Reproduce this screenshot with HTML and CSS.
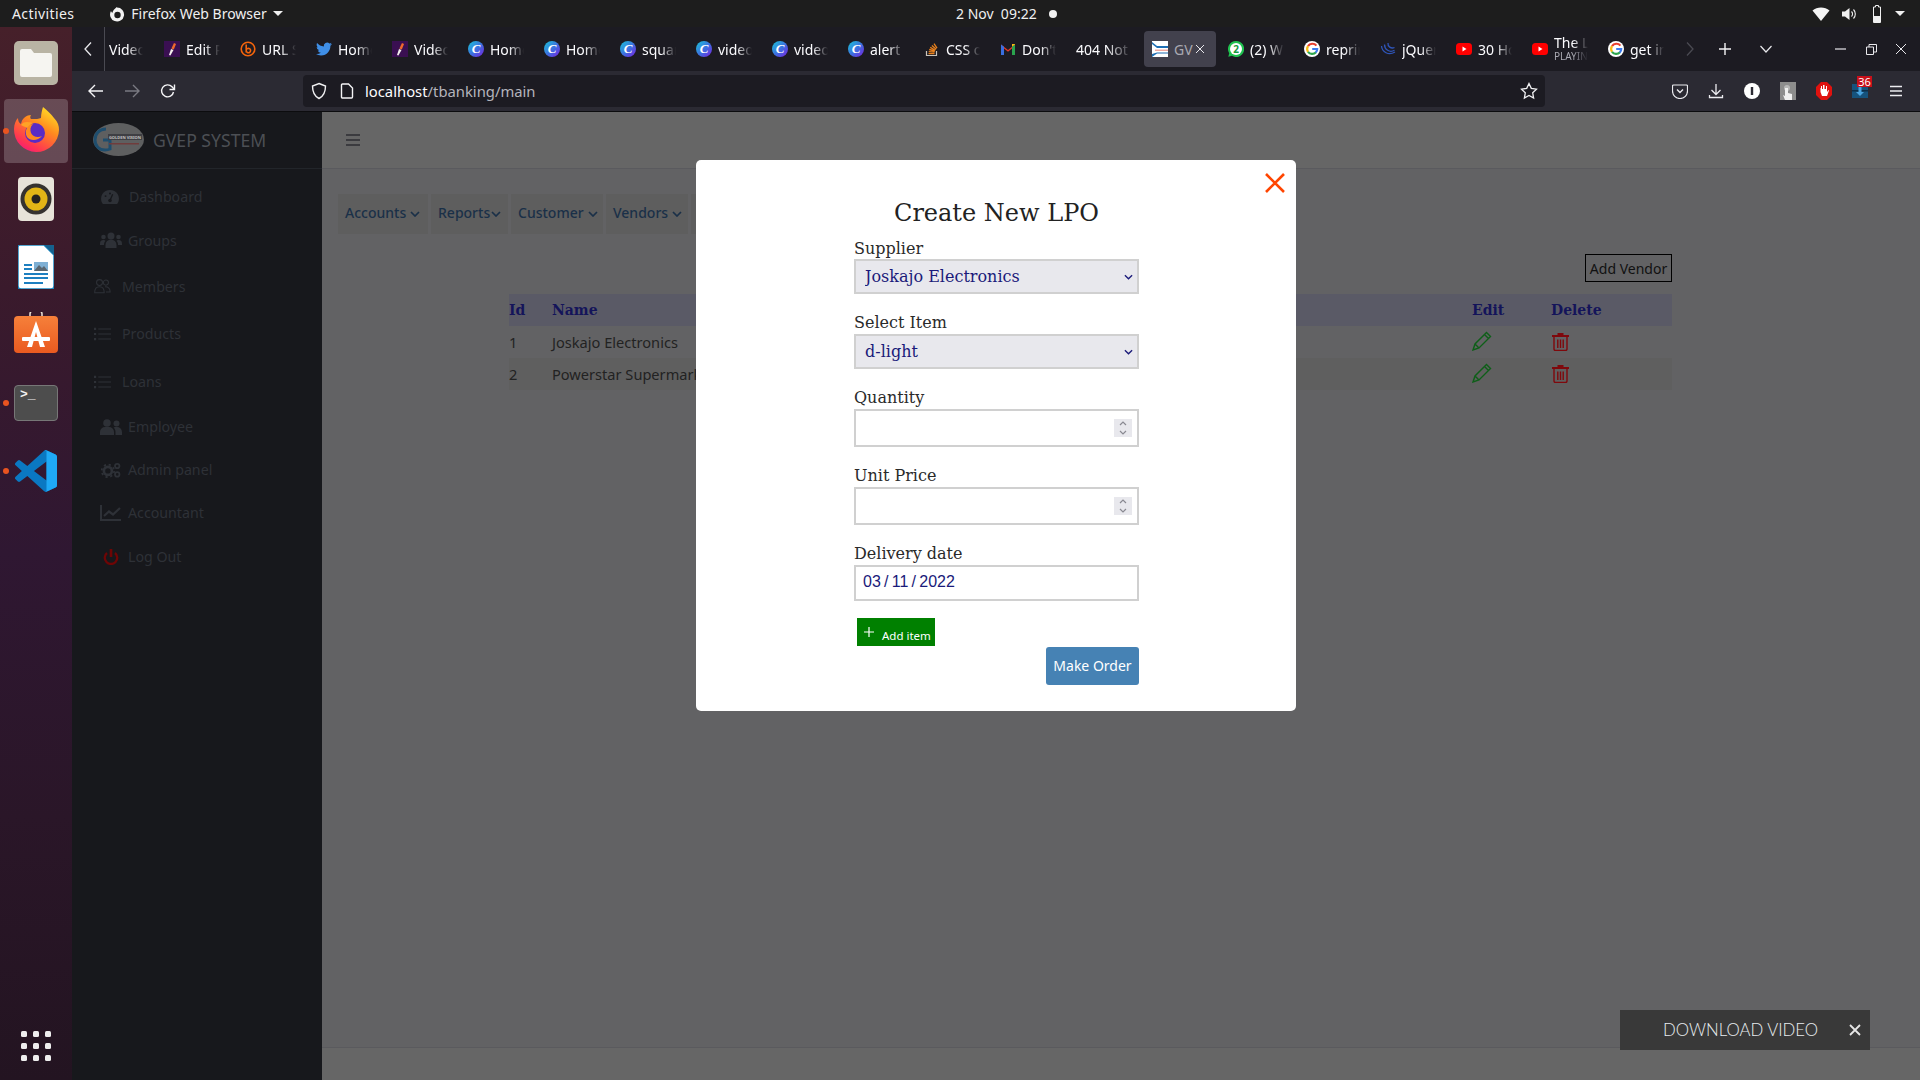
FILE: index.html
```html
<!DOCTYPE html>
<html lang="en">
<head>
<meta charset="utf-8">
<title>GVEP SYSTEM</title>
<link rel="stylesheet" href="styles.css">
</head>
<body>
<svg class="sprite" aria-hidden="true">
  <defs>
    <linearGradient id="g-canva" x1="0" y1="0" x2="1" y2="1"><stop offset="0" stop-color="#19c8d8"/><stop offset=".55" stop-color="#3f6be0"/><stop offset="1" stop-color="#7a1fe0"/></linearGradient>
    <linearGradient id="g-ff" x1="0.8" y1="0" x2="0.2" y2="1"><stop offset="0" stop-color="#ffe226"/><stop offset=".4" stop-color="#ff8a1f"/><stop offset=".8" stop-color="#ff3750"/><stop offset="1" stop-color="#f5157e"/></linearGradient>
    <linearGradient id="g-soft" x1="0" y1="0" x2="0" y2="1"><stop offset="0" stop-color="#f6803a"/><stop offset="1" stop-color="#ea5a20"/></linearGradient>
    <symbol id="i-canva" viewBox="0 0 16 16"><circle cx="8" cy="8" r="8" fill="url(#g-canva)"/><text x="8" y="12.4" text-anchor="middle" class="fav-c">C</text></symbol>
    <symbol id="i-pen" viewBox="0 0 16 16"><rect width="16" height="16" fill="#3a0f52"/><path d="M5 14 L7 8 L9.5 9 L6.4 14.6Z" fill="#f4f0ee"/><path d="M7.4 7.5 L10 2 L12 3 L9.8 8.6Z" fill="#f0692c"/></symbol>
    <symbol id="i-url" viewBox="0 0 16 16"><circle cx="8" cy="8" r="6.8" fill="none" stroke="#f4640c" stroke-width="1.6"/><path d="M6.2 3.5V11.5M6.2 9.5a2.2 2.2 0 1 1 0 .1" fill="none" stroke="#f4640c" stroke-width="1.6"/></symbol>
    <symbol id="i-tw" viewBox="0 0 24 24"><path fill="#3f8fe8" d="M23.95 4.57a10 10 0 0 1-2.82.78 4.96 4.96 0 0 0 2.16-2.72c-.95.55-2 .96-3.13 1.19a4.92 4.92 0 0 0-8.38 4.48C7.69 8.1 4.07 6.13 1.64 3.16a4.82 4.82 0 0 0-.67 2.48c0 1.71.87 3.21 2.19 4.1a4.9 4.9 0 0 1-2.23-.62v.06a4.92 4.92 0 0 0 3.95 4.83 5 5 0 0 1-2.21.08 4.94 4.94 0 0 0 4.6 3.42A9.87 9.87 0 0 1 0 19.54 13.94 13.94 0 0 0 7.55 21.7c9.06 0 14-7.5 14-14v-.63a10 10 0 0 0 2.4-2.5z"/></symbol>
    <symbol id="i-so" viewBox="0 0 16 16"><path d="M2.5 10v4.5h10V10" fill="none" stroke="#c9c4bc" stroke-width="1.2"/><path d="M4.5 12.6h6M4.7 10.6l5.9.6M5.2 8.5l5.7 1.5M6.2 6.4l5.2 2.9M7.9 4.4l4.3 3.8M10 2.6l3 4.6" fill="none" stroke="#e8801c" stroke-width="1.3"/></symbol>
    <symbol id="i-gm" viewBox="0 0 16 16"><path d="M1 14V3.5L8 9l7-5.500V14h-3V7.500L8 10.800 4 7.500V14Z" fill="#e5382b"/><path d="M1 14V3.500L4 5.800V14Z" fill="#3a6fe0"/><path d="M12 14V5.800L15 3.500V14Z" fill="#2aa34e"/><path d="M12 5.800L15 3.500V3L12 3Z" fill="#f8bc14"/></symbol>
    <symbol id="i-g" viewBox="0 0 16 16"><circle cx="8" cy="8" r="8" fill="#fff"/><path d="M12.4 4.600A5.200 5.200 0 0 0 4 5.200" fill="none" stroke="#e8402f" stroke-width="2.200"/><path d="M4 5.200a5.200 5.200 0 0 0 0 5.600" fill="none" stroke="#f8bc14" stroke-width="2.200"/><path d="M4 10.800a5.200 5.200 0 0 0 8 .4" fill="none" stroke="#2ea64e" stroke-width="2.200"/><path d="M8.200 8h5a5.200 5.200 0 0 1-1.500 3.600" fill="none" stroke="#3b7bf0" stroke-width="2.200"/></symbol>
    <symbol id="i-jq" viewBox="0 0 16 16"><g fill="none" stroke="#2f55b8" stroke-width="1.300"><path d="M1.500 5c.5 6 7 10 13.500 6"/><path d="M4.500 3.500c0 5 5 8.500 10 5.800"/><path d="M8 2c-.5 3.500 3 6 6.500 4.500"/></g></symbol>
    <symbol id="i-yt" viewBox="0 0 16 16"><rect y="2" width="16" height="12" rx="3.500" fill="#f00"/><path d="M6.500 5.500l4 2.500-4 2.500Z" fill="#fff"/></symbol>
    <symbol id="i-wa" viewBox="0 0 16 16"><path d="M8 0a8 8 0 0 0-6.800 12.200L.3 15.800l3.700-1A8 8 0 1 0 8 0Z" fill="#1fc14f"/><circle cx="8" cy="8" r="6" fill="#fff"/><text x="8" y="11.600" text-anchor="middle" class="fav-n">2</text></symbol>
    <symbol id="i-gv" viewBox="0 0 16 16"><rect width="16" height="16" fill="#fff"/><path d="M0 1L5 5H16V7H5L0 3Z" fill="#1e6fb4"/><path d="M3 8.500H16V10H3Z" fill="#f0a9a0"/><path d="M0 13L5 11.500H16V12.500H5L0 16Z" fill="#1e6fb4"/></symbol>
  </defs>
</svg>

<header class="topbar">
  <div class="top-left">
    <span class="activities">Activities</span>
    <svg class="top-ff" viewBox="0 0 16 16"><path d="M8 1.500A7 7 0 1 1 2 5c.4 1 .8 1.500 1.500 1.800C3.800 4.500 5.500 3 7.800 1Z" fill="#f2f2f2"/><circle cx="8.500" cy="9" r="3.200" fill="#1d1d1d"/></svg>
    <span>Firefox Web Browser</span>
    <span class="caret caret-app"></span>
  </div>
  <div class="clock"><span>2 Nov&nbsp; 09:22</span><i class="rec"></i></div>
  <div class="tray">
    <span class="tray-box"><svg width="18" height="16" viewBox="0 0 18 16"><path d="M0.500 4.500C5 .5 13 .5 17.500 4.500L9 15Z" fill="#f4f4f4"/></svg></span>
    <span class="tray-box"><svg width="16" height="16" viewBox="0 0 16 16"><path d="M1 5.500h3L8.500 2v12L4 10.500H1Z" fill="#f0f0f0"/><path d="M10.500 5.500a3.500 3.500 0 0 1 0 5M12.500 3.500a6.500 6.500 0 0 1 0 9" fill="none" stroke="#f0f0f0" stroke-width="1.100"/></svg></span>
    <span class="tray-box"><svg width="10" height="18" viewBox="0 0 10 18"><path d="M3.500 .5h3v1.500h2v15.500h-7V2h2Z" fill="none" stroke="#f0f0f0"/><rect x="2" y="11" width="6" height="6" fill="#f0f0f0"/></svg></span>
    <span class="tray-end"><span class="caret"></span></span>
  </div>
</header>

<div class="desktop">
  <nav class="dock">
    <div class="dock-tile"><svg width="44" height="44" viewBox="0 0 44 44"><rect width="44" height="44" rx="5" fill="#b9b4a4"/><path d="M6 10a2 2 0 0 1 2-2h9l3 4h16a2 2 0 0 1 2 2v20a2 2 0 0 1-2 2H8a2 2 0 0 1-2-2Z" fill="#f6f5f1"/></svg></div>
    <div class="dock-tile active"><i class="run-dot"></i>
      <svg class="dock-ff" width="46" height="46" viewBox="0 0 46 46"><path d="M23 45A22.500 22.500 0 0 1 1 22C1 17 3 13 5 11c0 3 1 5 3 6 1-6 6-9 10-9-1 2-1 3 0 4 5 0 8 0 10-1C28 7 29 3 30 0c4 3 8 7 11 11 4 4 5 8 5 12A22.500 22.500 0 0 1 23 45Z" fill="url(#g-ff)"/><circle cx="22" cy="26" r="10" fill="#5a2bc4"/><path d="M8 18c3-4 7-3 12-2-3 2-4 3-4 6-2-2-5-2-8-4Z" fill="#ffa226"/><path d="M14 30c-3-6 0-12 6-13-3 3-3 6-2 9 2 4 7 5 11 3-4 5-12 5-15 1Z" fill="#ff8a1f"/></svg>
    </div>
    <div class="dock-tile"><svg width="36" height="44" viewBox="0 0 36 44"><rect width="36" height="44" rx="4" fill="#e7e3d9"/><circle cx="18" cy="22" r="15.500" fill="#35322f"/><circle cx="18" cy="22" r="11.500" fill="#e2b516"/><circle cx="18" cy="22" r="4.500" fill="#25221f"/></svg></div>
    <div class="dock-tile"><svg width="36" height="44" viewBox="0 0 36 44"><path d="M2 0h24l10 10v31a3 3 0 0 1-3 3H3a3 3 0 0 1-3-3V2a2 2 0 0 1 2-2Z" fill="#fff" stroke="#1d8ac4" stroke-width="1.500"/><path d="M26 0l10 10V0Z" fill="#15628f"/><path d="M6 19h8v2H6Zm0 4h8v2H6Zm0 5h24v2H6Zm0 4h24v2H6Zm0 5h19v2H6Z" fill="#1d7fc0"/><rect x="16" y="17" width="14" height="9" fill="#7fb0d4"/><path d="M16 26l5-6 3 3 2-2 4 5Z" fill="#5b6770"/></svg></div>
    <div class="dock-tile"><svg class="dock-soft" width="44" height="41" viewBox="0 3 44 41"><path d="M16 8V5a3 3 0 0 1 3-3h6a3 3 0 0 1 3 3v3" fill="none" stroke="#efe6d8" stroke-width="1.500"/><rect y="7" width="44" height="37" rx="4" fill="url(#g-soft)"/><path d="M22 12l9 26h-5l-4-15-4 15h-5Z" fill="#fff"/><rect x="8" y="28" width="28" height="4" rx="1" fill="#fff"/></svg></div>
    <div class="dock-tile"><i class="run-dot"></i><div class="term"><span class="term-text">&gt;_</span></div></div>
    <div class="dock-tile"><i class="run-dot"></i>
      <svg width="42" height="42" viewBox="0 0 100 100"><path fill="#0a78c2" d="M96.500 10.800 75.900.9a6.200 6.200 0 0 0-7.100 1.200L29.400 38 12.200 25a4.200 4.200 0 0 0-5.300.2L1.400 30.200a4.200 4.200 0 0 0 0 6.200L16.300 50 1.400 63.600a4.200 4.200 0 0 0 0 6.200l5.500 5a4.200 4.200 0 0 0 5.300.2L29.400 62l39.400 35.900a6.200 6.200 0 0 0 7.100 1.200l20.600-9.900A6.200 6.200 0 0 0 100 83.600V16.400a6.200 6.200 0 0 0-3.500-5.600ZM75 72.700 45.100 50 75 27.300Z"/><path fill="#1fa9f6" d="M71 .3a6.200 6.200 0 0 1 4.900.6l20.600 9.900A6.200 6.200 0 0 1 100 16.400v67.200a6.200 6.200 0 0 1-3.500 5.600L75.900 99.100a6.200 6.200 0 0 1-4.900.6c2.500 1 4-.5 4-3.200V3.500C75 .8 73.500-.7 71 .3Z"/></svg>
    </div>
    <div class="app-grid"><i></i><i></i><i></i><i></i><i></i><i></i><i></i><i></i><i></i></div>
  </nav>

  <div class="browser">
    <div class="tabbar">
      <div class="tab-back"><svg width="10" height="16" viewBox="0 0 10 16"><path d="M8 1.500 2 8l6 6.500" fill="none" stroke="#e8e8ec" stroke-width="1.300"/></svg></div>
      <div class="tabstrip">
        <div class="tabs">
          <div class="tab tab-scrolled"><span class="tab-title">Video</span></div>
          <div class="tab"><svg class="fav"><use href="#i-pen"/></svg><span class="tab-title">Edit Post</span></div>
          <div class="tab"><svg class="fav"><use href="#i-url"/></svg><span class="tab-title">URL Short</span></div>
          <div class="tab"><svg class="fav"><use href="#i-tw"/></svg><span class="tab-title">Home</span></div>
          <div class="tab"><svg class="fav"><use href="#i-pen"/></svg><span class="tab-title">Video</span></div>
          <div class="tab"><svg class="fav"><use href="#i-canva"/></svg><span class="tab-title">Home</span></div>
          <div class="tab"><svg class="fav"><use href="#i-canva"/></svg><span class="tab-title">Home</span></div>
          <div class="tab"><svg class="fav"><use href="#i-canva"/></svg><span class="tab-title">square</span></div>
          <div class="tab"><svg class="fav"><use href="#i-canva"/></svg><span class="tab-title">video</span></div>
          <div class="tab"><svg class="fav"><use href="#i-canva"/></svg><span class="tab-title">video</span></div>
          <div class="tab"><svg class="fav"><use href="#i-canva"/></svg><span class="tab-title">alert</span></div>
          <div class="tab"><svg class="fav"><use href="#i-so"/></svg><span class="tab-title">CSS o</span></div>
          <div class="tab"><svg class="fav"><use href="#i-gm"/></svg><span class="tab-title">Don't</span></div>
          <div class="tab tab-plain"><span class="tab-title">404 Not</span></div>
          <div class="tab tab-active"><svg class="fav"><use href="#i-gv"/></svg><span class="tab-title tab-title-short">GV</span><svg class="tab-x" width="10" height="10" viewBox="0 0 10 10"><path d="M1 1l8 8M9 1l-8 8" stroke="#e8e8ec" stroke-width="1"/></svg></div>
          <div class="tab"><svg class="fav"><use href="#i-wa"/></svg><span class="tab-title">(2) WhatsApp</span></div>
          <div class="tab"><svg class="fav"><use href="#i-g"/></svg><span class="tab-title">reprint</span></div>
          <div class="tab"><svg class="fav"><use href="#i-jq"/></svg><span class="tab-title">jQuery</span></div>
          <div class="tab"><svg class="fav"><use href="#i-yt"/></svg><span class="tab-title">30 Hours</span></div>
          <div class="tab"><svg class="fav"><use href="#i-yt"/></svg><span class="tab-title tab-two"><span>The Lord</span><small>PLAYING</small></span></div>
          <div class="tab"><svg class="fav"><use href="#i-g"/></svg><span class="tab-title">get input</span></div>
        </div>
      </div>
      <div class="tab-ctrl">
        <span class="ctrl ctrl-a"><svg width="10" height="16" viewBox="0 0 10 16"><path d="M2 1.500 8 8l-6 6.500" fill="none" stroke="#4a4a52" stroke-width="1.300"/></svg></span>
        <span class="ctrl ctrl-b"><svg width="14" height="14" viewBox="0 0 14 14"><path d="M7 1v12M1 7h12" stroke="#f4f4f6" stroke-width="1.400"/></svg></span>
        <span class="ctrl ctrl-c"><svg width="14" height="10" viewBox="0 0 14 10"><path d="M1.500 2 7 8l5.500-6" fill="none" stroke="#e8e8ec" stroke-width="1.200"/></svg></span>
        <span class="ctrl ctrl-d"></span>
        <span class="ctrl ctrl-e"><svg width="12" height="2" viewBox="0 0 12 2"><path d="M0 1h11" stroke="#e8e8ec" stroke-width="1.200"/></svg></span>
        <span class="ctrl ctrl-e"><svg width="11" height="11" viewBox="0 0 11 11"><path d="M.5 3h7v7.500h-7ZM3 3V.5h7.500V8H8" fill="none" stroke="#e8e8ec"/></svg></span>
        <span class="ctrl ctrl-e"><svg width="12" height="12" viewBox="0 0 12 12"><path d="M1 1l10 10M11 1 1 11" stroke="#e8e8ec"/></svg></span>
      </div>
    </div>

    <div class="toolbar">
      <span class="tool"><svg width="16" height="14" viewBox="0 0 16 14"><path d="M15 7H1.500M7 1 1 7l6 6" fill="none" stroke="#f4f4f6" stroke-width="1.400"/></svg></span>
      <span class="tool"><svg width="16" height="14" viewBox="0 0 16 14"><path d="M1 7h13.500M9 1l6 6-6 6" fill="none" stroke="#7a7a82" stroke-width="1.400"/></svg></span>
      <span class="tool"><svg width="16" height="16" viewBox="0 0 16 16"><path d="M13.500 9a6 6 0 1 1-1.500-5.200L14 6" fill="none" stroke="#f4f4f6" stroke-width="1.400"/><path d="M14.500 1.500V6.500H9.500" fill="none" stroke="#f4f4f6" stroke-width="1.400"/></svg></span>
      <div class="urlbar">
        <svg width="16" height="18" viewBox="0 0 16 18"><path d="M8 1.500 14.500 4c0 6-1.500 10-6.500 12.500C3 14 1.500 10 1.500 4Z" fill="none" stroke="#f0f0f2" stroke-width="1.400"/></svg>
        <svg class="url-page" width="14" height="16" viewBox="0 0 14 16"><path d="M2.500 1h6l4 4v9a1 1 0 0 1-1 1h-9a1 1 0 0 1-1-1V2a1 1 0 0 1 1-1Z" fill="none" stroke="#f4f4f6" stroke-width="1.400"/></svg>
        <span class="url-text">localhost<span class="url-path">/tbanking/main</span></span>
        <svg class="url-star" width="18" height="18" viewBox="0 0 18 18"><path d="M9 1.500l2.300 4.900 5.200.7-3.800 3.700.9 5.300L9 13.500l-4.600 2.600.9-5.300L1.500 7.100l5.200-.7Z" fill="none" stroke="#f0f0f2" stroke-width="1.300"/></svg>
      </div>
      <div class="tool-right">
        <span class="tool"><svg width="16" height="16" viewBox="0 0 16 16"><path d="M1.500 2h13a1 1 0 0 1 1 1v5a7.500 7.500 0 0 1-15 0V3a1 1 0 0 1 1-1Z" fill="none" stroke="#ececf0" stroke-width="1.200"/><path d="M5 6.500l3 3 3-3" fill="none" stroke="#ececf0" stroke-width="1.400"/></svg></span>
        <span class="tool"><svg width="16" height="16" viewBox="0 0 16 16"><path d="M8 1v10M3.500 7 8 11.500 12.500 7M1.500 12v2.500h13V12" fill="none" stroke="#ececf0" stroke-width="1.300"/></svg></span>
        <span class="tool"><svg width="16" height="16" viewBox="0 0 16 16"><circle cx="8" cy="8" r="8" fill="#fff"/><rect x="6.800" y="4" width="2.400" height="8" fill="#2b2a33"/></svg></span>
        <span class="tool"><svg width="16" height="18" viewBox="0 0 16 18"><rect width="16" height="18" fill="#8d8d8d"/><circle cx="7" cy="6" r="3" fill="#b8b8b8"/><path d="M5 6h3v5l4 1v6H5l-2-5 2 1Z" fill="#f0f0f0"/></svg></span>
        <span class="tool"><svg width="16" height="18" viewBox="0 0 16 18"><path d="M5 0h6l5 5v8l-5 5H5l-5-5V5Z" fill="#e0120f"/><path d="M5 6V4h1v3h1V3h1.500v4H10V4h1v6l1.500-2 .5.500L11 14H6L4.500 10V6Z" fill="#fff"/></svg></span>
        <span class="tool tool-badged"><svg width="16" height="14" viewBox="0 0 16 14"><rect width="16" height="14" fill="#16527c"/><rect y="6" width="16" height="1.500" fill="#0d2f4a"/><path d="M6.500 3h3v5H12l-4 4-4-4h2.500Z" fill="#49a3e0"/></svg><b class="badge">36</b></span>
        <span class="tool"><svg width="14" height="12" viewBox="0 0 14 12"><path d="M1 1.500h12M1 6h12M1 10.500h12" stroke="#ececf0" stroke-width="1.300"/></svg></span>
      </div>
    </div>

    <div class="page">
      <aside class="sidebar">
        <div class="brand">
          <svg class="logo" width="51" height="33" viewBox="0 0 51 33"><ellipse cx="25.500" cy="16.500" rx="25.500" ry="16.500" fill="#5e5f60"/><path d="M13 6C6 6 2 11 2 17s4 10 10 10c3 0 5-1 5-1v-9h-7" fill="none" stroke="#1f4e6e" stroke-width="3"/><rect x="15" y="11" width="34" height="6" fill="#3f3f44"/><text x="32" y="16" text-anchor="middle" class="logo-text">GOLDEN VISION</text><rect x="16" y="20" width="30" height="1.500" fill="#703c3c"/></svg>
          <span class="brand-name">GVEP SYSTEM</span>
        </div>
        <ul class="side-nav">
          <li class="side-item"><svg class="side-ico" viewBox="0 0 20 18"><path d="M10 1a10 10 0 0 0-9 14.500L2 17h16l1-1.500A10 10 0 0 0 10 1Z" fill="#2e3137"/><path d="M10 13 13 6" stroke="#17181c" stroke-width="1.500"/><circle cx="10" cy="13" r="2" fill="#17181c"/><circle cx="5" cy="8" r="1.100" fill="#17181c"/><circle cx="10" cy="5" r="1.100" fill="#17181c"/></svg><span>Dashboard</span></li>
          <li class="side-item"><svg class="side-ico side-ico-w" viewBox="0 0 22 16"><circle cx="11" cy="4" r="3.500" fill="#2e3137"/><circle cx="3.500" cy="5" r="2.300" fill="#2e3137"/><circle cx="18.500" cy="5" r="2.300" fill="#2e3137"/><path d="M5.500 16v-3a5 5 0 0 1 11 0v3ZM0 12c0-3 1-4 3.500-4 1 0 1.500.3 2 .8C4.500 10 4 11 4 13H0Zm22 0c0-3-1-4-3.500-4-1 0-1.500.3-2 .8 1 1.200 1.500 2.200 1.500 4.200h4Z" fill="#2e3137"/></svg><span>Groups</span></li>
          <li class="side-item side-item-tight"><svg class="side-ico" viewBox="0 0 20 18"><g fill="none" stroke="#2e3137" stroke-width="1.200"><circle cx="6.500" cy="5" r="3.500"/><circle cx="14" cy="5" r="3"/><path d="M.8 17c0-5 2-7 5.700-7s5.500 2 5.500 7ZM13 10c4 0 6 1.500 6 6h-5"/></g></svg><span>Members</span></li>
          <li class="side-item side-item-tight"><svg class="side-ico" viewBox="0 0 20 16"><path d="M5 2h15M5 8h15M5 14h15" stroke="#2e3137" stroke-width="1.200"/><path d="M0 2h2.500M0 8h2.500M0 14h2.500" stroke="#2e3137" stroke-width="2.500"/></svg><span>Products</span></li>
          <li class="side-item side-item-tight"><svg class="side-ico" viewBox="0 0 20 16"><path d="M5 2h15M5 8h15M5 14h15" stroke="#2e3137" stroke-width="1.200"/><path d="M0 2h2.500M0 8h2.500M0 14h2.500" stroke="#2e3137" stroke-width="2.500"/></svg><span>Loans</span></li>
          <li class="side-item"><svg class="side-ico side-ico-w" viewBox="0 0 22 16"><circle cx="7" cy="4" r="3.800" fill="#2e3137"/><circle cx="16.500" cy="4.500" r="3" fill="#2e3137"/><path d="M0 16v-3a5 5 0 0 1 5-5h4a5 5 0 0 1 5 5v3ZM15.500 16v-3c0-2-.8-3.500-2-4.500 1-.5 2-.5 3-.5a5 5 0 0 1 5.500 5v3Z" fill="#2e3137"/></svg><span>Employee</span></li>
          <li class="side-item"><svg class="side-ico side-ico-w" viewBox="0 0 22 18"><circle cx="7.500" cy="10" r="4.500" fill="none" stroke="#2e3137" stroke-width="3"/><circle cx="7.500" cy="10" r="7" fill="none" stroke="#2e3137" stroke-width="2" stroke-dasharray="2.500 3"/><circle cx="18" cy="4.500" r="2.500" fill="none" stroke="#2e3137" stroke-width="2"/><circle cx="18" cy="14" r="2.500" fill="none" stroke="#2e3137" stroke-width="2"/></svg><span>Admin panel</span></li>
          <li class="side-item"><svg class="side-ico side-ico-w" viewBox="0 0 22 16"><path d="M1 0v15h20" fill="none" stroke="#2e3137" stroke-width="2"/><path d="M4 11l5-4.500 4 3L20 3" fill="none" stroke="#2e3137" stroke-width="2.200"/></svg><span>Accountant</span></li>
          <li class="side-item"><svg class="side-ico side-ico-w" viewBox="0 0 22 18"><path d="M6.500 4.500a7 7 0 1 0 9 0" fill="none" stroke="#6e0505" stroke-width="2.600"/><path d="M11 0v9" stroke="#6e0505" stroke-width="3"/></svg><span>Log Out</span></li>
        </ul>
      </aside>

      <main class="main">
        <div class="main-top"><svg width="14" height="12" viewBox="0 0 14 12"><path d="M0 1h14M0 6h14M0 11h14" stroke="#3b3b3f" stroke-width="2"/></svg></div>
        <div class="content">
          <div class="menu-row">
            <span class="menu-btn menu-acc">Accounts <svg class="menu-chev" viewBox="0 0 10 6"><path d="M1 1l4 4 4-4" fill="none" stroke="#1a3048" stroke-width="1.700"/></svg></span>
            <span class="menu-btn menu-rep">Reports<svg class="menu-chev menu-chev-close" viewBox="0 0 10 6"><path d="M1 1l4 4 4-4" fill="none" stroke="#1a3048" stroke-width="1.700"/></svg></span>
            <span class="menu-btn menu-cus">Customer <svg class="menu-chev" viewBox="0 0 10 6"><path d="M1 1l4 4 4-4" fill="none" stroke="#1a3048" stroke-width="1.700"/></svg></span>
            <span class="menu-btn menu-ven">Vendors <svg class="menu-chev" viewBox="0 0 10 6"><path d="M1 1l4 4 4-4" fill="none" stroke="#1a3048" stroke-width="1.700"/></svg></span>
            <span class="menu-btn menu-more"></span>
          </div>
          <div class="add-row"><span class="add-vendor">Add Vendor</span></div>
          <table class="vendors">
            <colgroup><col class="c-id"><col><col class="c-edit"><col class="c-del"></colgroup>
            <thead><tr><th>Id</th><th>Name</th><th>Edit</th><th>Delete</th></tr></thead>
            <tbody>
              <tr><td>1</td><td>Joskajo Electronics</td>
                <td><svg class="ico-edit" viewBox="0 0 20 20"><path d="M1 19l2-6L14.500 1.500l4 4L7 17Z M3 13l4 4 M12.500 3.500l4 4" fill="none" stroke="#0e5f18" stroke-width="1.400"/></svg></td>
                <td><svg class="ico-del" viewBox="0 0 17 19"><path d="M0 3h17v2H0ZM5.500 3V1h6v2" fill="#7f080c"/><path d="M2 5v12a1.500 1.500 0 0 0 1.500 1.500h10A1.500 1.500 0 0 0 15 17V5M5.800 7.500v8.500M8.500 7.500v8.500M11.200 7.500v8.500" fill="none" stroke="#7f080c" stroke-width="1.400"/></svg></td></tr>
              <tr><td>2</td><td>Powerstar Supermarket</td>
                <td><svg class="ico-edit" viewBox="0 0 20 20"><path d="M1 19l2-6L14.500 1.500l4 4L7 17Z M3 13l4 4 M12.500 3.500l4 4" fill="none" stroke="#0e5f18" stroke-width="1.400"/></svg></td>
                <td><svg class="ico-del" viewBox="0 0 17 19"><path d="M0 3h17v2H0ZM5.500 3V1h6v2" fill="#7f080c"/><path d="M2 5v12a1.500 1.500 0 0 0 1.500 1.500h10A1.500 1.500 0 0 0 15 17V5M5.800 7.500v8.500M8.500 7.500v8.500M11.200 7.500v8.500" fill="none" stroke="#7f080c" stroke-width="1.400"/></svg></td></tr>
            </tbody>
          </table>
        </div>
        <div class="main-foot"></div>
      </main>

      <section class="modal">
        <svg class="modal-x" width="20" height="20" viewBox="0 0 20 20"><path d="M1 1l18 18M19 1 1 19" stroke="#ff4500" stroke-width="2.600"/></svg>
        <h2 class="modal-title">Create New LPO</h2>
        <form class="lpo">
          <div class="field">
            <label class="lbl lbl-first">Supplier</label>
            <div class="sel-wrap"><select class="sel"><option>Joskajo Electronics</option></select><svg class="sel-chev" viewBox="0 0 10 6"><path d="M1 1l4 4 4-4" fill="none" stroke="#1a1a7a" stroke-width="1.500"/></svg></div>
          </div>
          <div class="field">
            <label class="lbl">Select Item</label>
            <div class="sel-wrap"><select class="sel"><option>d-light</option></select><svg class="sel-chev" viewBox="0 0 10 6"><path d="M1 1l4 4 4-4" fill="none" stroke="#1a1a7a" stroke-width="1.500"/></svg></div>
          </div>
          <div class="field">
            <label class="lbl">Quantity</label>
            <div class="num-wrap"><input class="inp inp-num" type="text"><span class="spin"><svg viewBox="0 0 10 18"><path d="M2 6l3-3 3 3M2 12l3 3 3-3" fill="none" stroke="#8a8a92" stroke-width="1.200"/></svg></span></div>
          </div>
          <div class="field">
            <label class="lbl">Unit Price</label>
            <div class="num-wrap"><input class="inp inp-num" type="text"><span class="spin"><svg viewBox="0 0 10 18"><path d="M2 6l3-3 3 3M2 12l3 3 3-3" fill="none" stroke="#8a8a92" stroke-width="1.200"/></svg></span></div>
          </div>
          <div class="field">
            <label class="lbl">Delivery date</label>
            <input class="inp inp-date" type="text" value="03 / 11 / 2022">
          </div>
          <div class="add-item"><svg width="12" height="12" viewBox="0 0 12 12"><path d="M6 1v10M1 6h10" stroke="#fff" stroke-width="1.200"/></svg><span>Add item</span></div>
          <div class="order-row"><span class="make-order">Make Order</span></div>
        </form>
      </section>

      <aside class="dl-video"><span>DOWNLOAD VIDEO</span><svg width="12" height="12" viewBox="0 0 12 12"><path d="M1 1l10 10M11 1 1 11" stroke="#e6e6e6" stroke-width="1.800"/></svg></aside>
    </div>
  </div>
</div>
</body>
</html>
```

FILE: styles.css
```css
* { box-sizing: border-box; }
html, body { margin: 0; height: 100%; overflow: hidden; }
body {
  width: 1920px; height: 1080px; display: flex; flex-direction: column;
  font-family: "Noto Sans", sans-serif; background: #1d1d1d; color: #eee;
}
.sprite { position: absolute; width: 0; height: 0; }
.fav-c { font: italic 700 13px "Liberation Serif", serif; fill: #fff; }
.fav-n { font: 700 10px "Noto Sans", sans-serif; fill: #169c3e; }
.logo-text { font: 700 4px "Noto Sans", sans-serif; fill: #c4c4c4; }

/* GNOME top bar */
.topbar { flex: 0 0 27px; display: flex; align-items: center; background: #1d1d1d; font-size: 14px; color: #f0f0f0; }
.top-left { flex: 0 0 956px; display: flex; align-items: center; padding-left: 12px; }
.activities { margin-right: 35px; letter-spacing: .4px; }
.top-ff { width: 16px; height: 16px; margin-right: 6px; }
.caret { display: inline-block; width: 0; height: 0; border-left: 5px solid transparent; border-right: 5px solid transparent; border-top: 5px solid #f0f0f0; }
.caret-app { margin-left: 6px; }
.clock { display: flex; align-items: center; font-size: 14px; }
.rec { width: 8px; height: 8px; border-radius: 50%; background: #f2f2f2; margin-left: 12px; }
.tray { margin-left: auto; display: flex; align-items: center; padding-right: 11px; }
.tray-box { width: 28px; display: flex; justify-content: center; align-items: center; }
.tray-end { width: 18px; display: flex; justify-content: center; }

.desktop { flex: 1; display: flex; min-height: 0; }

/* Dock */
.dock {
  flex: 0 0 72px; display: flex; flex-direction: column; gap: 4px; padding: 4px;
  background: linear-gradient(180deg, #46202a 0%, #3a1a2c 25%, #2f1732 50%, #2a1628 75%, #231421 100%);
}
.dock-tile { position: relative; flex: 0 0 64px; display: flex; align-items: center; justify-content: center; border-radius: 4px; }
.dock-tile.active { background: rgba(255, 255, 255, .2); }
.dock-ff { margin-top: -2px; }
.dock-soft { margin-top: -5px; }
.run-dot { position: absolute; left: -1px; top: 29px; width: 6px; height: 6px; border-radius: 50%; background: #e95420; }
.term { width: 44px; height: 36px; background: #4d4d4d; border: 1px solid #777; border-radius: 4px; padding: 1px 5px; }
.term-text { display: block; font: 700 13px/16px "Liberation Mono", monospace; color: #f2f2f2; }
.app-grid { margin-top: auto; margin-bottom: 15px; align-self: center; display: grid; grid-template-columns: repeat(3, 6px); gap: 6px; }
.app-grid i { width: 6px; height: 6px; border-radius: 1.500px; background: #eee; }

.browser { flex: 1; display: flex; flex-direction: column; min-width: 0; }

/* Tabs */
.tabbar { flex: 0 0 44px; display: flex; background: #1c1b22; }
.tab-back { flex: 0 0 33px; display: flex; align-items: center; justify-content: center; border-right: 1px solid #4a4a52; }
.tabstrip { flex: 0 0 1567px; overflow: hidden; }
.tabs { display: flex; gap: 4px; margin-left: -25px; padding-top: 4px; }
.tab { flex: 0 0 72px; height: 36px; display: flex; align-items: center; padding-left: 8px; border-radius: 4px; font-size: 14px; color: #fbfbfe; }
.tab-scrolled { padding-left: 29px; }
.tab-active { background: #42414d; }
.fav { flex: 0 0 16px; width: 16px; height: 16px; margin-right: 6px; }
.tab-title { flex: 0 0 34px; white-space: nowrap; overflow: hidden; mask-image: linear-gradient(90deg, #000 55%, transparent 100%); -webkit-mask-image: linear-gradient(90deg, #000 55%, transparent 100%); }
.tab-plain .tab-title { flex-basis: 56px; }
.tab-title-short { flex-basis: 19px; color: #a9a9b2; mask-image: none; -webkit-mask-image: none; }
.tab-x { margin-left: 2px; }
.tab-two { display: flex; flex-direction: column; line-height: 14px; }
.tab-two small { font-size: 10px; line-height: 13px; color: #a9a9b2; }
.tab-ctrl { flex: 1; display: flex; }
.ctrl { display: flex; align-items: center; justify-content: center; }
.ctrl-a { flex: 0 0 36px; }
.ctrl-b { flex: 0 0 34px; }
.ctrl-c { flex: 0 0 48px; }
.ctrl-d { flex: 0 0 36px; }
.ctrl-e { flex: 0 0 30px; }

/* Toolbar */
.toolbar { flex: 0 0 41px; display: flex; align-items: center; padding: 0 0 1px 6px; background: #2b2a33; border-bottom: 1px solid #0c0c0e; }
.tool { position: relative; flex: 0 0 36px; display: flex; align-items: center; justify-content: center; }
.urlbar { margin-left: 117px; flex: 0 0 1242px; height: 32px; display: flex; align-items: center; padding: 0 7px 0 8px; background: #1c1b22; border-radius: 4px; }
.url-page { margin-left: 13px; }
.url-text { margin-left: 11px; font-size: 14.800px; color: #fbfbfe; }
.url-path { color: #b4b4bc; }
.url-star { margin-left: auto; }
.tool-right { margin-left: 117px; display: flex; }
.badge { position: absolute; left: 15px; top: -6px; width: 15px; height: 11px; text-align: center; background: #c8101a; font: 400 11px/11px "Noto Sans", sans-serif; color: #fff; }

/* Page (dimmed by modal) */
.page { position: relative; flex: 1; display: flex; min-height: 0; background: #666; }
.sidebar { flex: 0 0 250px; background: #17181c; }
.brand { height: 57px; display: flex; align-items: center; padding: 0 0 1px 21px; border-bottom: 1px solid #22252a; }
.logo { margin-right: 9px; }
.brand-name { font-size: 17.600px; color: #4c4f54; }
.side-nav {
  list-style: none; margin: 0; padding: 6px 0 0; display: grid;
  grid-template-rows: 43px 44.500px 47px 48.500px 47px 43px 43px 43.500px 44px;
}
.side-item { display: flex; align-items: center; padding-left: 29px; font-size: 14.200px; color: #2e3137; }
.side-ico { width: 18px; height: 16px; margin-right: 10px; }
.side-ico-w { width: 22px; height: 16px; margin-right: 6px; margin-left: -1px; }
.side-item-tight { padding-left: 22px; }
.side-item-tight .side-ico { width: 17px; margin-right: 11px; }

.main { flex: 1; display: flex; flex-direction: column; min-width: 0; }
.main-top { flex: 0 0 57px; display: flex; align-items: center; padding-left: 24px; background: #666; border-bottom: 1px solid #5a5a5e; }
.content { flex: 1; padding: 25px 248px 0 16px; background: #626264; }
.menu-row { display: flex; gap: 3px; }
.menu-btn { height: 40px; display: flex; align-items: center; padding: 0 0 3px 7px; background: #5e5e5e; font-size: 14px; font-weight: 500; color: #1a3048; }
.menu-acc { flex: 0 0 90px; }
.menu-rep { flex: 0 0 77px; }
.menu-cus { flex: 0 0 92px; }
.menu-ven { flex: 0 0 82px; }
.menu-more { flex: 0 0 80px; }
.menu-chev { width: 10px; height: 6px; margin-left: 4px; margin-top: 2px; }
.menu-chev-close { margin-left: 1px; }
.add-row { display: flex; justify-content: flex-end; margin-top: 20px; }
.add-vendor { height: 28px; width: 87px; display: flex; align-items: center; justify-content: center; border: 1px solid #000; font-size: 14px; color: #111; }
.vendors { width: 1163px; margin: 12px 0 0 171px; border-collapse: collapse; table-layout: fixed; }
.c-id { width: 43px; }
.c-edit { width: 79px; }
.c-del { width: 121px; }
.vendors th { height: 32px; padding: 0; text-align: left; font: 700 14px "DejaVu Serif", serif; color: #14145a; background: #5a5a66; }
.vendors td { height: 32px; padding: 0; font-size: 14.600px; color: #222; vertical-align: middle; }
.vendors tbody tr:nth-child(even) { background: #5f5f5f; }
.ico-edit { display: block; width: 20px; height: 20px; margin-top: -2px; }
.ico-del { display: block; width: 17px; height: 19px; margin: -2px 0 0 1px; }
.main-foot { flex: 0 0 33px; background: #666; border-top: 1px solid #5a5a5e; }

/* Modal */
.modal {
  position: absolute; left: 624px; top: 48px; width: 600px; height: 551px;
  padding: 39px 157px 0 158px; background: #fff; border-radius: 5px; color: #212529;
  font-family: "DejaVu Serif", serif;
}
.modal-x { position: absolute; right: 11px; top: 13px; }
.modal-title { margin: 0; font: 400 24px/28px "DejaVu Serif", serif; text-align: center; color: #222; }
.lpo { display: block; margin-top: 9px; }
.field { display: flex; flex-direction: column; margin-bottom: 18px; }
.lbl { height: 22px; font-size: 16px; line-height: 22px; color: #2a2a2a; }
.lbl-first { height: 23px; line-height: 25px; }
.sel-wrap, .num-wrap { position: relative; }
.sel {
  display: block; width: 100%; height: 35px; padding: 0 20px 0 9px; appearance: none; -webkit-appearance: none;
  background: #e8e8ed; border: 2px solid #d0d0d0; border-radius: 0; font: 16px "DejaVu Serif", serif; color: #1a1a7a;
}
.sel-chev { position: absolute; right: 6px; top: 15px; width: 9px; height: 6px; pointer-events: none; }
.inp { display: block; width: 100%; background: #fff; border: 2px solid #d0d0d0; border-radius: 0; outline: 0; }
.inp-num { height: 38px; }
.inp-date { height: 36px; padding: 0 0 2px 7px; font: 16px "Liberation Sans", sans-serif; word-spacing: -1.200px; color: #1a1a7a; }
.spin { position: absolute; right: 7px; top: 10px; width: 18px; height: 18px; display: flex; justify-content: center; background: #e8e8ed; }
.spin svg { width: 10px; height: 18px; }
.add-item { width: 78px; height: 28px; margin: -1px 0 0 3px; display: flex; align-items: flex-start; padding: 8px 0 0 6px; background: green; color: #fff; font: 11.500px/14px "Noto Sans", sans-serif; }
.add-item span { margin: 3px 0 0 7px; }
.order-row { display: flex; justify-content: flex-end; margin-top: 1px; }
.make-order { width: 93px; height: 38px; display: flex; align-items: center; justify-content: center; padding-bottom: 2px; background: #4682b4; border-radius: 3px; color: #fff; font: 14px "Noto Sans", sans-serif; }

.dl-video { position: absolute; left: 1548px; top: 898px; width: 250px; height: 40px; display: flex; align-items: center; padding: 0 0 1px 43px; background: #393939; font: 300 16.800px "Lato", sans-serif; color: #e8edf0; }
.dl-video svg { margin-left: 31px; }
```
